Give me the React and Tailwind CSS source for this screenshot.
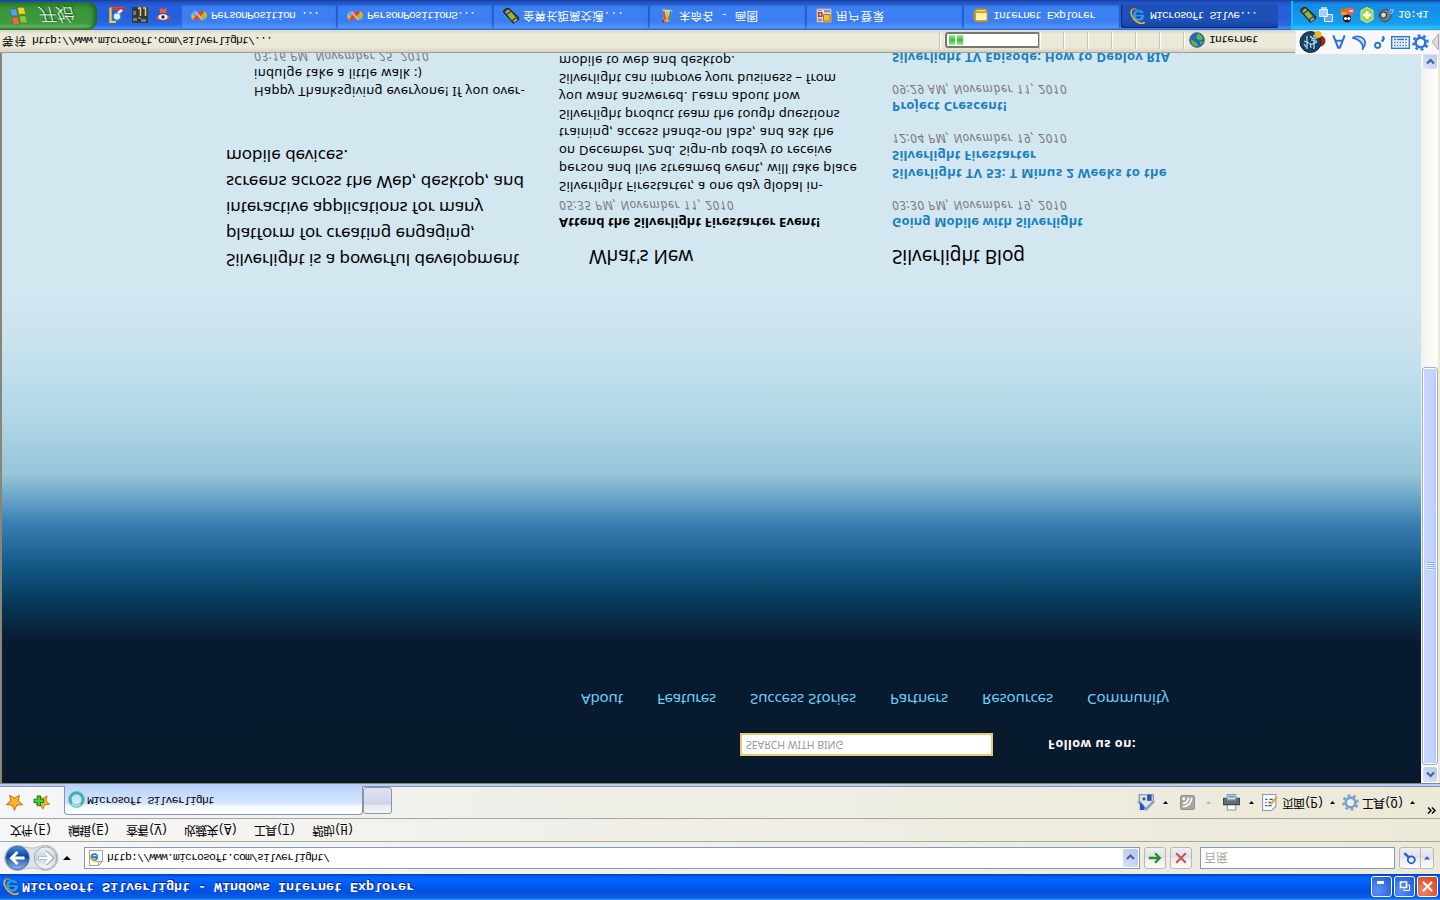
import { useLayoutEffect, useRef, useState } from "react";

const UI = "font-['Liberation_Mono','Noto_Sans_CJK_SC',monospace]";

/* Single text line whose tracking is adjusted to fill a given width. */
function Line({ w, className = "", children }) {
  const ref = useRef(null);
  const [ls, setLs] = useState(0);
  useLayoutEffect(() => {
    const natural = ref.current.getBoundingClientRect().width;
    setLs((w - natural) / ref.current.textContent.length);
  }, [w]);
  return (
    <div className={`whitespace-pre ${className}`}>
      <span ref={ref} style={{ letterSpacing: `${ls}px` }}>{children}</span>
    </div>
  );
}

function Svg({ s = 16, vb = "0 0 16 16", className = "", children }) {
  return (
    <svg width={s} height={s} viewBox={vb} className={`block shrink-0 ${className}`} fill="none">
      {children}
    </svg>
  );
}

function IeIcon({ s = 16 }) {
  return (
    <Svg s={s}>
      <path d="M14.500 9.500H6c.2 1.600 1.300 2.200 2.700 2.200 1 0 1.800-.4 2.300-1.200h3.200c-.8 2.600-2.900 4-5.500 4-3.500 0-5.900-2.400-5.900-5.800 0-3.500 2.500-6 6-6 3.700 0 5.900 2.600 5.700 6.800z" fill="#2a9bf0" stroke="#0f4fae" strokeWidth=".6" />
      <path d="M6 7.500h5.100c-.2-1.400-1.100-2-2.500-2-1.400 0-2.300.6-2.600 2z" fill="#0d3f9c" />
      <path d="M2.600 14.800C-.6 12 2 6 5.900 3 9 .6 13.200-.6 14.500 2.200" stroke="#eeb022" strokeWidth="1.600" />
      <path d="M2.200 14.600c1 .9 2.800.6 4.400-.4" stroke="#c98212" strokeWidth="1.400" />
    </Svg>
  );
}

function WinFlag() {
  return (
    <Svg s={20} vb="0 0 20 20">
      <g strokeWidth=".8" stroke="#1f4f1f" strokeOpacity=".35">
        <path d="M3 2.500c2-1.500 4.200-1.500 6.500-.3L8 9.300C6 8.300 4 8.300 1.500 9.500z" fill="#ee6a34" />
        <path d="M10.700 2.700c2 1 4.300 1 6.800-.2L16 9.500c-2.300 1.200-4.500 1-6.700.2z" fill="#8cc63f" />
        <path d="M1.200 11C3.500 9.700 5.600 9.700 7.700 10.700l-1.500 6.800c-2.100-1-4.200-1-6.300.4z" fill="#5b98f5" />
        <path d="M9 11.200c2.100 1 4.400 1 6.700-.2L14.200 18c-2.400 1.200-4.600 1-6.700.1z" fill="#fcd116" />
      </g>
    </Svg>
  );
}

function PeopleIcon() {
  return (
    <Svg>
      <circle cx="4" cy="8" r="3.800" fill="#e8b93a" />
      <circle cx="12" cy="8.500" r="3.900" fill="#e3b436" />
      <circle cx="4" cy="10.500" r="2.600" fill="#5aa9f4" />
      <circle cx="12.500" cy="7" r="2.400" fill="#8ac83c" />
      <path d="M3.500 4.500 12 12.500" stroke="#e0441e" strokeWidth="3.200" />
      <path d="M4.500 12 11.500 4" stroke="#f3a087" strokeWidth="2" />
    </Svg>
  );
}

function DeviceIcon() {
  return (
    <Svg>
      <path d="M.8 11.500 10.500.8l5 3.700v2.200L5.800 15.500H3.500L.8 13.500z" fill="#4a4433" stroke="#17140e" />
      <path d="m4.300 9.200 4.500-5.400 3.900 3-4.600 5.200z" fill="#8fb83a" />
      <path d="m10 2.800 1.200-1.300 3.300 2.500-1.300 1.600zM2.200 11.800l1.200-1.500 3.600 2.700-1.500 1.600z" fill="#b6a98c" />
    </Svg>
  );
}

function PaintIcon() {
  return (
    <Svg>
      <path d="m5 3 5-.5L13.500 14 3.500 15z" fill="#b9d4e4" stroke="#7590a6" strokeWidth=".7" />
      <path d="M6.500 4 4.500 13" stroke="#e34b1c" strokeWidth="2" />
      <path d="M8 2v10" stroke="#f5ad20" strokeWidth="1.800" />
      <path d="m9.500 4 2.500 9" stroke="#3b9440" strokeWidth="1.600" />
      <path d="M4.500 4 3.500 1.500" stroke="#c22" strokeWidth="2" />
    </Svg>
  );
}

function FormIcon() {
  return (
    <Svg>
      <path d="M1 2h14v13H1z" fill="#d8e2f4" stroke="#d7a77a" />
      <path d="M2 7h4.500v5H2z" fill="#c1322c" /><path d="M3.500 8.500H5v2H3.500z" fill="#fff" />
      <path d="M7.500 3h6.500v6.500H7.500z" fill="#f6c226" stroke="#a67712" />
      <path d="M8 11.500h6v2.500H8zM2 13h4v1H2zM2 3h4v2.500H2z" fill="#7d94cb" />
    </Svg>
  );
}

function FolderIcon() {
  return (
    <Svg>
      <path d="M.5 4 3 2h11.500v12l-2.500 1.500H3L.5 12z" fill="#c8921f" />
      <path d="M2.500 3.500h11.500v8H2.500z" fill="#fdf3b4" stroke="#d49c21" />
      <path d="M3.500 12.500h9v1.500h-9z" fill="#f7d468" />
    </Svg>
  );
}

const TASKS = [
  { Icon: PeopleIcon, label: "PersonPosition ...", w: 108, box: "w-[155px]" },
  { Icon: PeopleIcon, label: "PersonPositionS...", w: 108, box: "w-[155px]" },
  { Icon: DeviceIcon, label: "金箅长距离交通...", w: 101, box: "w-[155px]" },
  { Icon: PaintIcon, label: "未命名 - 画图", w: 79, box: "w-[156px]" },
  { Icon: FormIcon, label: "用户登录", w: 49, box: "w-[156px]" },
  { Icon: FolderIcon, label: "Internet Explorer", w: 102, box: "w-[156px]" },
];

function TitleBar() {
  return (
    <div className="flex h-[26px] items-center bg-[linear-gradient(180deg,#3c96ff_0px,#0a62ea_2px,#0553df_6px,#0054e8_12px,#0061fb_18px,#0066ff_22px,#0050d8_25px,#003cb0_26px)] pl-[3px]">
      <IeIcon s={17} />
      <Line w={392} className="ml-[2px] pt-[1px] font-['Liberation_Mono',monospace] text-[13.5px] font-bold leading-[18px] text-white [text-shadow:1px_1px_0_#0a1883]">
        Microsoft Silverlight - Windows Internet Explorer
      </Line>
      <div className="ml-auto flex gap-[2px] pr-[2px]">
        <div className="flex size-[21px] items-center justify-center rounded-[3px] border border-white bg-[radial-gradient(circle_at_30%_30%,#5a92f8,#2054d6)]">
          <div className="mr-[3px] mt-[8px] h-[3px] w-[7px] bg-white" />
        </div>
        <div className="flex size-[21px] items-center justify-center rounded-[3px] border border-white bg-[radial-gradient(circle_at_30%_30%,#5a92f8,#2054d6)]">
          <Svg s={13} vb="0 0 13 13"><path d="M9 10.500h2.500V4.500" stroke="#fff" strokeWidth="0" /><path d="M6 4V2.500h5.500V8H9.500" stroke="#fff" /><path d="M2.500 5.500h6V11h-6z" stroke="#fff" strokeWidth="1.600" /></Svg>
        </div>
        <div className="flex size-[21px] items-center justify-center rounded-[3px] border border-white bg-[radial-gradient(circle_at_30%_30%,#f08866,#d63c14)]">
          <Svg s={13} vb="0 0 13 13"><path d="m2 2 9 9M11 2l-9 9" stroke="#fff" strokeWidth="2" /></Svg>
        </div>
      </div>
    </div>
  );
}

function ToolButton({ className = "", children }) {
  return (
    <div className={`flex h-[22px] items-center justify-center rounded-[3px] border border-[#b8b8b0] bg-[linear-gradient(180deg,#fdfdfd,#e9ebf0_50%,#dcdfe8_50%,#f0f0f2)] ${className}`}>{children}</div>
  );
}

function AddressRow() {
  return (
    <div className="flex h-[32px] items-center bg-[linear-gradient(90deg,#f3f5f8,#f1f1ee_40%,#ece9d8)] pl-[4px]">
      <svg width="56" height="28" viewBox="0 0 56 28" className="block">
        <defs>
          <linearGradient id="bk" x1="0" y1="0" x2="0" y2="1"><stop offset="0" stopColor="#8fb6e8" /><stop offset=".45" stopColor="#2c66bb" /><stop offset=".55" stopColor="#0c4099" /><stop offset="1" stopColor="#3f93e0" /></linearGradient>
          <linearGradient id="fw" x1="0" y1="0" x2="0" y2="1"><stop offset="0" stopColor="#fbfcfd" /><stop offset=".5" stopColor="#c9d3dd" /><stop offset="1" stopColor="#eef3f7" /></linearGradient>
        </defs>
        <path d="M13 1.500c6 0 7 2.500 14.500 2.500S36 1.500 41.500 1.500a12.500 12.500 0 0 1 0 25c-6 0-7-2.500-14-2.500S19 26.500 13 26.500a12.500 12.500 0 0 1 0-25z" fill="#dfe3e8" stroke="#b5bac2" />
        <circle cx="13.500" cy="14" r="11.700" fill="url(#bk)" stroke="#4c6a9a" />
        <circle cx="41.500" cy="14" r="11.200" fill="url(#fw)" stroke="#9aa5b3" />
        <path d="M20.500 14H8M13.500 8 7.500 14l6 6" stroke="#fff" strokeWidth="3" fill="none" />
        <path d="M34.500 14H47M41.500 8l6 6-6 6" stroke="#9fa9b5" strokeWidth="4" fill="none" />
        <path d="M35 14h12M41.500 8.500 47 14l-5.500 5.500" stroke="#fff" strokeWidth="2.500" fill="none" />
      </svg>
      <Svg s={8} vb="0 0 8 8" className="ml-[3px]"><path d="M0 2h8L4 6z" fill="#000" /></Svg>
      <div className="ml-[13px] flex h-[22px] w-[1056px] items-center border border-[#7f9db9] bg-white pl-[3px] pr-[1px]">
        <Svg s={16}>
          <path d="M1.500.5h9l4 4v11h-13z" fill="#fff" stroke="#a4a39a" /><path d="M10.500.5v4h4" stroke="#a4a39a" />
          <path d="M10 9.500H4.200c.4 2 3 2.400 4.200 1h1.400c-1.400 3-7.300 2.500-7.200-1.700C2.700 4 10 3.600 10 9.500zM4.400 8h3.800c-.5-2-3.300-2-3.800 0z" fill="#1b7ad6" stroke="#1b7ad6" strokeWidth=".6" />
          <path d="M1.500 13C0 10.500 5 4.500 10 4.500" stroke="#eeb022" strokeWidth="1.300" />
        </Svg>
        <Line w={222} className={`ml-[3px] pt-[2px] text-[11.500px] leading-[16px] text-black ${UI}`}>http://www.microsoft.com/silverlight/</Line>
        <div className="ml-auto flex h-[18px] w-[15px] items-center justify-center rounded-[2px] bg-[linear-gradient(135deg,#d6e0fd,#aec4f5)]">
          <Svg s={9} vb="0 0 9 9"><path d="m1 3 3.500 3.500L8 3" stroke="#4d6185" strokeWidth="2" /></Svg>
        </div>
      </div>
      <ToolButton className="ml-[4px] w-[22px]"><Svg s={14}><path d="M1 8h12M8 2.500 13.500 8 8 13.500" stroke="#23911f" strokeWidth="2.600" /></Svg></ToolButton>
      <ToolButton className="ml-[4px] w-[22px]"><Svg s={14}><path d="m2.500 2.500 11 11M13.500 2.500l-11 11" stroke="#d0504c" strokeWidth="2.400" /></Svg></ToolButton>
      <div className="ml-[8px] flex h-[22px] w-[195px] items-center border border-[#7f9db9] bg-white pl-[3px]">
        <span className="font-['Noto_Sans_CJK_SC',sans-serif] text-[12px] leading-[16px] text-[#aca899]">百度</span>
      </div>
      <ToolButton className="ml-[4px] w-[22px] rounded-r-none"><Svg s={14}><circle cx="9.500" cy="6" r="4" stroke="#1d5ce0" strokeWidth="2" /><path d="M6.500 9 1.500 13.500" stroke="#1d5ce0" strokeWidth="2.600" /></Svg></ToolButton>
      <ToolButton className="-ml-px w-[14px] rounded-l-none"><Svg s={6} vb="0 0 6 6"><path d="M0 1.500h6L3 4.800z" fill="#1d5ce0" /></Svg></ToolButton>
    </div>
  );
}

const MENUS = [["文件", "F", 41], ["编辑", "E", 41], ["查看", "V", 41], ["收藏夹", "A", 53], ["工具", "T", 41], ["帮助", "H", 41]];

function MenuRow() {
  return (
    <div className={`flex h-[23px] items-center gap-[17px] border-t border-[#aca899] bg-[linear-gradient(90deg,#f5f6f7,#f0f0ea_40%,#ece9d8)] pl-[10px] pt-[1px] text-[12px] leading-[16px] text-black ${UI}`}>
      {MENUS.map(([t, k, w]) => (
        <div key={k} className={w === 53 ? "w-[53px]" : "w-[41px]"}>
          <Line w={w}>{t}(<u>{k}</u>)</Line>
        </div>
      ))}
    </div>
  );
}

function Star({ add }) {
  return (
    <Svg s={17}>
      <path d="m8 .8 2.100 4.700 5.200.5-3.900 3.500 1.100 5.100L8 12l-4.500 2.600 1.100-5.100L.7 6l5.200-.5z" fill="#fbb52c" stroke="#c77a12" transform={add ? "translate(2 1) scale(.9)" : ""} />
      {add && <path d="M4 5h3v3h3v3H7v3H4v-3H1V8h3z" fill="#4fce3a" stroke="#1c8418" />}
    </Svg>
  );
}

function Caret({ className = "" }) {
  return <Svg s={5} vb="0 0 5 5" className={className}><path d="M0 1h5L2.500 4z" fill="currentColor" /></Svg>;
}

function GearShape({ color, hole, s }) {
  return (
    <Svg s={s}>
      <circle cx="8" cy="8" r="6.700" stroke={color} strokeWidth="2.200" strokeDasharray="2.600 2.660" />
      <circle cx="8" cy="8" r="4.600" stroke={color} strokeWidth="2.400" fill={hole} />
    </Svg>
  );
}

function TabRow() {
  return (
    <div className="flex h-[33px] items-end border-t border-[#aca899] bg-[linear-gradient(90deg,#f5f6f7,#f0f0ea_35%,#ece9d8)]">
      <div className="flex h-[32px] w-[64px] items-center gap-[10px] border-b border-[#8c93a9] pl-[6px]">
        <Star /><Star add />
      </div>
      <div className="flex h-[29px] w-[299px] items-center rounded-t-[4px] border border-b-0 border-[#8c93a9] bg-[linear-gradient(180deg,#fff_0%,#f4faff_28%,#d4e6fc_38%,#bad4fb_100%)] pl-[3px]">
        <Svg s={17}><circle cx="8" cy="8" r="6" stroke="#35b5b2" strokeWidth="2.600" /><path d="M3.500 4a6 6 0 0 1 8.500-.5" stroke="#a5e6e0" strokeWidth="2" /><circle cx="8" cy="8" r="7.400" stroke="#5b9caf" strokeWidth=".7" /></Svg>
        <Line w={127} className={`ml-[2px] text-[11.500px] leading-[16px] text-black ${UI}`}>Microsoft Silverlight</Line>
      </div>
      <div className="h-[28px] w-[29px] border-b border-[#8c93a9]">
        <div className="h-[27px] rounded-[3px] border border-[#8c93a9] bg-[linear-gradient(180deg,#f6f7fa_0%,#e6e9f3_30%,#cfd4e8_36%,#dfe3f1_100%)]" />
      </div>
      <div className={`flex h-[32px] flex-1 items-center border-b border-[#8c93a9] text-[12px] leading-[16px] text-black ${UI}`}>
        <Svg s={18} className="ml-[745px]">
          <path d="M2 9 8 2l6.500 7v5.500H2z" fill="#dce4ee" stroke="#7388a3" />
          <path d="M.5 8.500 8 1l7.500 7.500" stroke="#8ba3bf" strokeWidth="1.500" /><path d="M2.500 1h4v3L2.500 8z" fill="#2357c8" /><path d="M9 9h4v5.500H9z" fill="#235a9d" /><path d="M5 9.500h2.500V12H5z" fill="#475b6c" />
        </Svg>
        <Caret className="ml-[8px]" />
        <Svg s={15} className="ml-[12px]"><rect x=".5" y=".5" width="15" height="15" rx="2" fill="#a7a7a0" stroke="#8b8b85" /><circle cx="4" cy="12" r="1.500" fill="#fff" /><path d="M3 7a6 6 0 0 1 6 6M3 3.500A9.500 9.500 0 0 1 12.500 13" stroke="#fff" strokeWidth="1.800" /></Svg>
        <Caret className="ml-[11px] text-[#bfbbae]" />
        <Svg s={17} className="ml-[12px]"><path d="M4 1h8v6H4z" fill="#fff" stroke="#8397ad" /><path d="M.5 6h15v6H.5z" fill="#666c73" stroke="#42474d" /><path d="M4 10.500h8v5H4z" fill="#dfeaf3" stroke="#8797a8" /><path d="M5 12.500h6v2H5z" fill="#45a9e5" /></Svg>
        <Caret className="ml-[9px]" />
        <Svg s={17} className="ml-[7px]"><path d="M1.500.5H10l4 4v11H1.500z" fill="#f7faff" stroke="#8c98a8" /><path d="M4 5h2M7 5h3M4 8h1M7 8h2M4 11h2M8 11h3" stroke="#34507a" strokeWidth="1.200" /><path d="m9 6.500 6 6.500" stroke="#dfa035" strokeWidth="2" /></Svg>
        <Line w={41} className="ml-[4px]">页面(<u>P</u>)</Line>
        <Caret className="ml-[7px]" />
        <div className="ml-[7px]"><GearShape s={17} color="#7fa1c0" hole="#e8edf0" /></div>
        <Line w={41} className="ml-[3px]">工具(<u>O</u>)</Line>
        <Caret className="ml-[7px]" />
        <Svg s={9} vb="0 0 9 9" className="mb-[17px] ml-[12px]"><path d="m1 1.500 3 3-3 3M5 1.500l3 3-3 3" stroke="#000" strokeWidth="1.400" /></Svg>
      </div>
    </div>
  );
}

const NAV = [["About", 42], ["Features", 59], ["Success Stories", 106], ["Partners", 58], ["Resources", 71], ["Community", 82]];

const NEWS = [
  ["Silverlight Firestarter, a one day global in-", 264],
  ["person and live streamed event, will take place", 298],
  ["on December 2nd. Sign-up today to receive", 273],
  ["training, access hands-on labs, and ask the", 275],
  ["Silverlight product team the tough questions", 281],
  ["you want answered. Learn about how", 241],
  ["Silverlight can improve your business – from", 277],
  ["mobile to web and desktop.", 176],
];

const INTRO = [
  ["Silverlight is a powerful development", 293],
  ["platform for creating engaging,", 249],
  ["interactive applications for many", 257],
  ["screens across the Web, desktop, and", 298],
  ["mobile devices.", 122],
];

const BLOG = [
  { title: [["Going Mobile with Silverlight", 191]], date: "03:30 PM, November 19, 2010" },
  { title: [["Silverlight TV 53: T Minus 2 Weeks to the", 275], ["Silverlight Firestarter", 144]], date: "12:04 PM, November 19, 2010" },
  { title: [["Project Crescent!", 115]], date: "09:29 AM, November 11, 2010" },
  { title: [["Silverlight TV Episode: How to Deploy RIA", 278]] },
];

function DateLine({ children }) {
  return <Line w={175} className="text-[12px] italic text-[#7a7a7a]">{children}</Line>;
}

function Page() {
  return (
    <div className="h-[730px] flex-1 overflow-hidden bg-[linear-gradient(180deg,#071a2e_0px,#081a2f_140px,#093d5f_186px,#125785_216px,#3a7fb2_260px,#66a3c8_283px,#99c5d9_310px,#b0d7e7_366px,#bfdfec_410px,#c9e2ee_440px,#d3e7f1_490px)] font-['Noto_Sans','Open_Sans',sans-serif]">
      <div className="mt-[27px] flex h-[23px] pl-[738px]">
        <div className="w-[253px] border-2 border-[#f0c674] bg-white pl-[4px] text-[10.500px] leading-[19px] text-[#999]">
          <Line w={97}>SEARCH WITH BING</Line>
        </div>
        <Line w={88} className="ml-[55px] text-[12.500px] font-bold leading-[24px] text-white">Follow us on:</Line>
      </div>
      <div className="mt-[21px] flex h-[24px] gap-[34px] pl-[579px] text-[15px] leading-[24px] text-[#6dcff6]">
        {NAV.map(([t, w]) => <Line key={t} w={w}>{t}</Line>)}
      </div>
      <div className="mt-[414px] flex pl-[224px] text-[13px] leading-[18px] text-black">
        <div className="w-[333px] shrink-0">
          <div className="pt-[1px]">
            {INTRO.map(([t, w]) => <Line key={t} w={w} className="text-[17px] leading-[26px]">{t}</Line>)}
          </div>
          <div className="mt-[42px] pl-[28px]">
            <Line w={271}>Happy Thanksgiving everyone! If you over-</Line>
            <Line w={168}>indulge take a little walk :)</Line>
            <DateLine>03:16 PM, November 25, 2010</DateLine>
          </div>
        </div>
        <div className="w-[333px] shrink-0">
          <Line w={104} className="mb-[10px] pl-[30px] pt-[2px] text-[19px] leading-[30px]">What's New</Line>
          <Line w={261} className="font-bold">Attend the Silverlight Firestarter Event!</Line>
          <DateLine>05:35 PM, November 11, 2010</DateLine>
          {NEWS.map(([t, w]) => <Line key={t} w={w}>{t}</Line>)}
        </div>
        <div className="w-[333px] shrink-0">
          <Line w={133} className="mb-[10px] pt-[2px] text-[19px] leading-[30px]">Silverlight Blog</Line>
          {BLOG.map((p) => (
            <div key={p.title[0][0]} className="mb-[13px]">
              {p.title.map(([t, w]) => <Line key={t} w={w} className="font-bold text-[#1a80bf]">{t}</Line>)}
              {p.date && <DateLine>{p.date}</DateLine>}
            </div>
          ))}
        </div>
      </div>
    </div>
  );
}

function ScrollButton({ d, className = "" }) {
  return (
    <div className={`flex h-[17px] w-[16px] items-center justify-center rounded-[3px] border border-white bg-[linear-gradient(135deg,#dbe4fe,#b3c8f7)] ${className}`}>
      <Svg s={9} vb="0 0 9 9"><path d={d} stroke="#4d6185" strokeWidth="2.200" /></Svg>
    </div>
  );
}

function ScrollBar() {
  return (
    <div className="flex h-[730px] w-[17px] flex-col bg-[linear-gradient(90deg,#f3f1ec,#fefefb)] pl-[1px]">
      <ScrollButton d="M1 6.500 4.500 3 8 6.500" />
      <div className="mt-px flex h-[398px] w-[16px] flex-col items-center justify-center gap-[1px] rounded-[3px] border border-[#98b0e0] bg-[linear-gradient(90deg,#c8d6fb,#c2d3fc_70%,#b4c8f6)] shadow-[inset_0_0_0_1px_#fff]">
        {[0, 1, 2, 3].map((i) => <div key={i} className="h-[1px] w-[7px] bg-[#8cb0f8] shadow-[-1px_-1px_0_#eef4fe]" />)}
      </div>
      <ScrollButton d="m1 2.500 3.500 3.500L8 2.500" className="mt-auto" />
    </div>
  );
}

function ImeBar() {
  return (
    <div className="absolute right-0 top-[845px] z-10 flex h-[25px] w-[145px] items-center border border-[#e4e4e4] bg-[#f8f8f8] pl-[3px]">
      <div className="h-[20px] w-[1px] bg-[#bbb]" />
      <svg width="28" height="24" viewBox="0 0 28 24" fill="none" className="shrink-0">
        <circle cx="21" cy="13" r="5.500" fill="#a3251e" /><circle cx="11.500" cy="12" r="10.500" fill="#174266" stroke="#0b2740" />
        <path d="m7 7-2 3M8 5v13M5 13l5-2M12 6l-1 5M15 5v14M11 9l7 3M12 14l6-1M14 15l-3 3M16 15l3 2" stroke="#c6e2f6" strokeWidth="1.200" />
        <circle cx="19" cy="19.500" r="3.600" fill="#f6b31c" />
      </svg>
      <div className="ml-[5px] flex items-center">
        <Svg s={14}><path d="M1.500 15.500 7 1.500h2l5.500 14M4 9.500h8" stroke="#2c74dc" strokeWidth="2.400" /></Svg>
        <Svg s={15} className="ml-[6px]"><path d="M1 13c4 3 12 1.500 13-4.500.3-3-1-5-2.500-7 .5 5-3 9.500-10.500 11.500z" fill="#c9defa" stroke="#2c74dc" strokeWidth="1.900" /></Svg>
        <Svg s={15} className="ml-[5px]"><circle cx="6" cy="5" r="2.800" stroke="#2c74dc" strokeWidth="2" /><path d="M10 9.500c2.500.5 3 2.500 1.500 5" stroke="#2c74dc" strokeWidth="2.600" /></Svg>
        <svg width="19" height="13" viewBox="0 0 19 13" className="ml-[4px] shrink-0" fill="none"><rect x=".7" y=".7" width="17.600" height="11.600" stroke="#2c74dc" strokeWidth="1.400" /><path d="M3 3.500h13M3 6.500h13" stroke="#2c74dc" strokeWidth="1.400" strokeDasharray="1.500 1.300" /><path d="M3 9.500h2M6 9.500h7M14 9.500h2" stroke="#2c74dc" strokeWidth="1.400" /></svg>
        <div className="ml-[2px]"><GearShape s={17} color="#2c74dc" hole="#f8f8f8" /></div>
        <svg width="8" height="16" viewBox="0 0 8 16" className="ml-[2px] shrink-0"><path d="M7.500 0v16L1 8z" fill="#ddd" stroke="#aaa" /></svg>
      </div>
    </div>
  );
}

function StatusBar() {
  return (
    <div className={`flex h-[23px] items-center border-t border-[#a29f90] bg-[linear-gradient(180deg,#d8d4c4_0px,#ece9d8_5px,#ece9d8_18px,#d9d5c5_22px)] pl-[2px] text-[11.500px] leading-[16px] text-black ${UI}`}>
      <Line w={25} className="pt-[1px]">等待</Line>
      <Line w={240} className="ml-[5px] pt-[2px]">http://www.microsoft.com/silverlight/...</Line>
      <div className="ml-auto h-[17px] w-[1px] bg-white shadow-[-1px_0_0_#c8c4b4]" />
      <div className="ml-[4px] mt-[1px] flex h-[16px] w-[95px] items-center gap-[2px] rounded-[3px] border-2 border-[#77776f] bg-white pl-[2px]">
        <div className="h-[10px] w-[6px] bg-[linear-gradient(180deg,#9ee89c,#32c62e,#9ee89c)]" />
        <div className="h-[10px] w-[6px] bg-[linear-gradient(180deg,#9ee89c,#32c62e,#9ee89c)]" />
      </div>
      <div className="flex gap-[23px]">
        {[0, 1, 2, 3, 4, 5, 6].map((i) => <div key={i} className="h-[17px] w-[1px] bg-white shadow-[-1px_0_0_#c8c4b4]" />)}
      </div>
      <Svg s={16} className="ml-[4px] mt-[2px]"><circle cx="8" cy="8" r="7.300" fill="#2665c0" stroke="#4b6180" /><path d="M3 4c2-2.500 5-2.500 6-2 0 2-1 3-3 4S3 9 2 8zM8 9c2-1.500 5-1 6 0-1 3-3 5-5 5.500C8 13 7 11 8 9zM11 3l3 3-3 1z" fill="#55c22d" /></Svg>
      <Line w={49} className="ml-[4px] mr-[182px] pt-[3px]">Internet</Line>
    </div>
  );
}

function Task({ Icon, label, w, box, active }) {
  return (
    <div className={`flex h-[24px] shrink-0 items-center rounded-[2px] pl-[9px] ${box} ${active ? "bg-[linear-gradient(180deg,#173f98,#1b50b8_30%,#1e52b7)] shadow-[inset_1px_1px_1px_#0d2b75]" : "bg-[linear-gradient(180deg,#5996fb,#3a7ef2_25%,#3c81f3_80%,#3170e2)] shadow-[inset_-1px_-1px_1px_#2258c8]"}`}>
      <Icon />
      <Line w={w} className="ml-[4px] pt-[2px]">{label}</Line>
    </div>
  );
}

function TaskBar() {
  return (
    <div className={`flex h-[30px] bg-[linear-gradient(180deg,#2560d8_0px,#4090f2_2px,#2a68e2_5px,#245ddb_14px,#2560e0_24px,#2150c0_28px,#183fa0_30px)] text-[11.500px] leading-[16px] text-white ${UI}`}>
      <div className="flex h-[28px] w-[97px] items-center rounded-r-[9px] bg-[linear-gradient(180deg,#2c7a2c_0px,#68b368_3px,#3e9a3e_7px,#3a963a_20px,#2c7f2c_28px)] pl-[10px] shadow-[inset_-3px_0_4px_#1c631c]">
        <WinFlag />
        <span className="ml-[7px] font-['Noto_Sans_CJK_SC',sans-serif] text-[18px] font-light italic leading-[20px] [text-shadow:1px_1px_1px_#1a4a1a]">开始</span>
      </div>
      <div className="flex w-[85px] items-center gap-[7px] pl-[12px]">
        <Svg><path d="M1.500 15V1h5.500M1 14.500h13" stroke="#fbcf33" strokeWidth="2.400" /><path d="M2.500 14.500H14l1-3" stroke="#e6291f" strokeWidth="2.500" /><circle cx="8" cy="6.500" r="3.800" fill="#eef7ff" stroke="#2e8bd6" strokeWidth="1.500" /><path d="m9 10 4 3" stroke="#fff" strokeWidth="2.500" /></Svg>
        <Svg><path d="M0 0h16v16H0z" fill="#33393d" /><path d="M1 2h4v3H1zM9 1h5v3H9zM1 8h3v4H1zM6 4h3v2H6z" fill="#6e7c7a" /><path d="M8.500 7v8H6M13.500 7v8H11M6 14.500h3" stroke="#f3cf50" strokeWidth="1.500" /></Svg>
        <Svg><path d="M4.500 15 5 10h6l1 5-3.500-1z" fill="#ed5a33" /><path d="M.5 5C4 2 12 2 15.500 5 13 10.500 3 10.500.5 5z" fill="#e24a2b" /><ellipse cx="8" cy="6" rx="4.500" ry="2.700" fill="#fff" /><circle cx="8" cy="6" r="1.700" fill="#222" /></Svg>
      </div>
      <div className="flex h-[27px] items-center gap-[1px] pt-[1px]">
        {TASKS.map((t) => <Task key={t.label} {...t} />)}
        <Task Icon={IeIcon} label="Microsoft Silve..." w={107} box="w-[157px]" active />
      </div>
      <div className="ml-auto flex h-[29px] w-[149px] items-center gap-[2px] border-l-2 border-[#18bcf5] bg-[linear-gradient(180deg,#17a4f4_0px,#32bdf8_2px,#149ff0_6px,#1290e8_20px,#138ce4_26px,#0d62b6_29px)] pl-[7px]">
        <DeviceIcon />
        <Svg><path d="M6.500 1.500h8v7h-8z" fill="#6ca6e2" stroke="#e3f1fc" /><path d="M1.500 6.500h8v7h-8z" fill="#a9cff4" stroke="#e3f1fc" /><path d="M3 15h6" stroke="#dbe8f3" strokeWidth="1.500" /></Svg>
        <Svg className="ml-[3px]"><path d="M1 13.500 2 8h10l1 5.500-5 1.500z" fill="#e3682c" /><circle cx="8" cy="4.500" r="4" fill="#271a15" /><circle cx="6.500" cy="4.500" r="1.500" fill="#fff" /><circle cx="9.800" cy="4.500" r="1.500" fill="#fff" /><path d="M2 9.500h6" stroke="#f6a125" strokeWidth="2.400" /><circle cx="12" cy="12" r="3.600" fill="#ef5b55" /><path d="M10 12h4" stroke="#fff" strokeWidth="1.400" /></Svg>
        <Svg className="ml-[2px]"><path d="m8 .5 6 3v9l-6 3-6-3v-9z" fill="#9bd531" stroke="#d7f29a" /><path d="M8 4v8M4 8h8" stroke="#fff" strokeWidth="2.800" /></Svg>
        <Svg className="ml-[1px]"><circle cx="7" cy="7.500" r="6" fill="#777b82" stroke="#45484e" /><circle cx="5.500" cy="8" r="3" fill="#d5d8dc" stroke="#222" /><path d="M11 11c1.500.5 2 1.500 2 3M12 9c2 .5 3 2 3 5" stroke="#b3dcff" /></Svg>
        <Line w={30} className="ml-[2px] pt-[2px]">10:41</Line>
      </div>
    </div>
  );
}

export default function App() {
  return (
    <div className="relative h-[900px] w-[1440px] -scale-y-100 overflow-hidden bg-[#ece9d8]">
      <TitleBar />
      <AddressRow />
      <MenuRow />
      <TabRow />
      <div className="h-[2px] bg-[#b9cdf8]" />
      <div className="flex border-l-2 border-t border-[#8a8677] pr-[2px]">
        <Page />
        <ScrollBar />
      </div>
      <StatusBar />
      <TaskBar />
      <ImeBar />
    </div>
  );
}
